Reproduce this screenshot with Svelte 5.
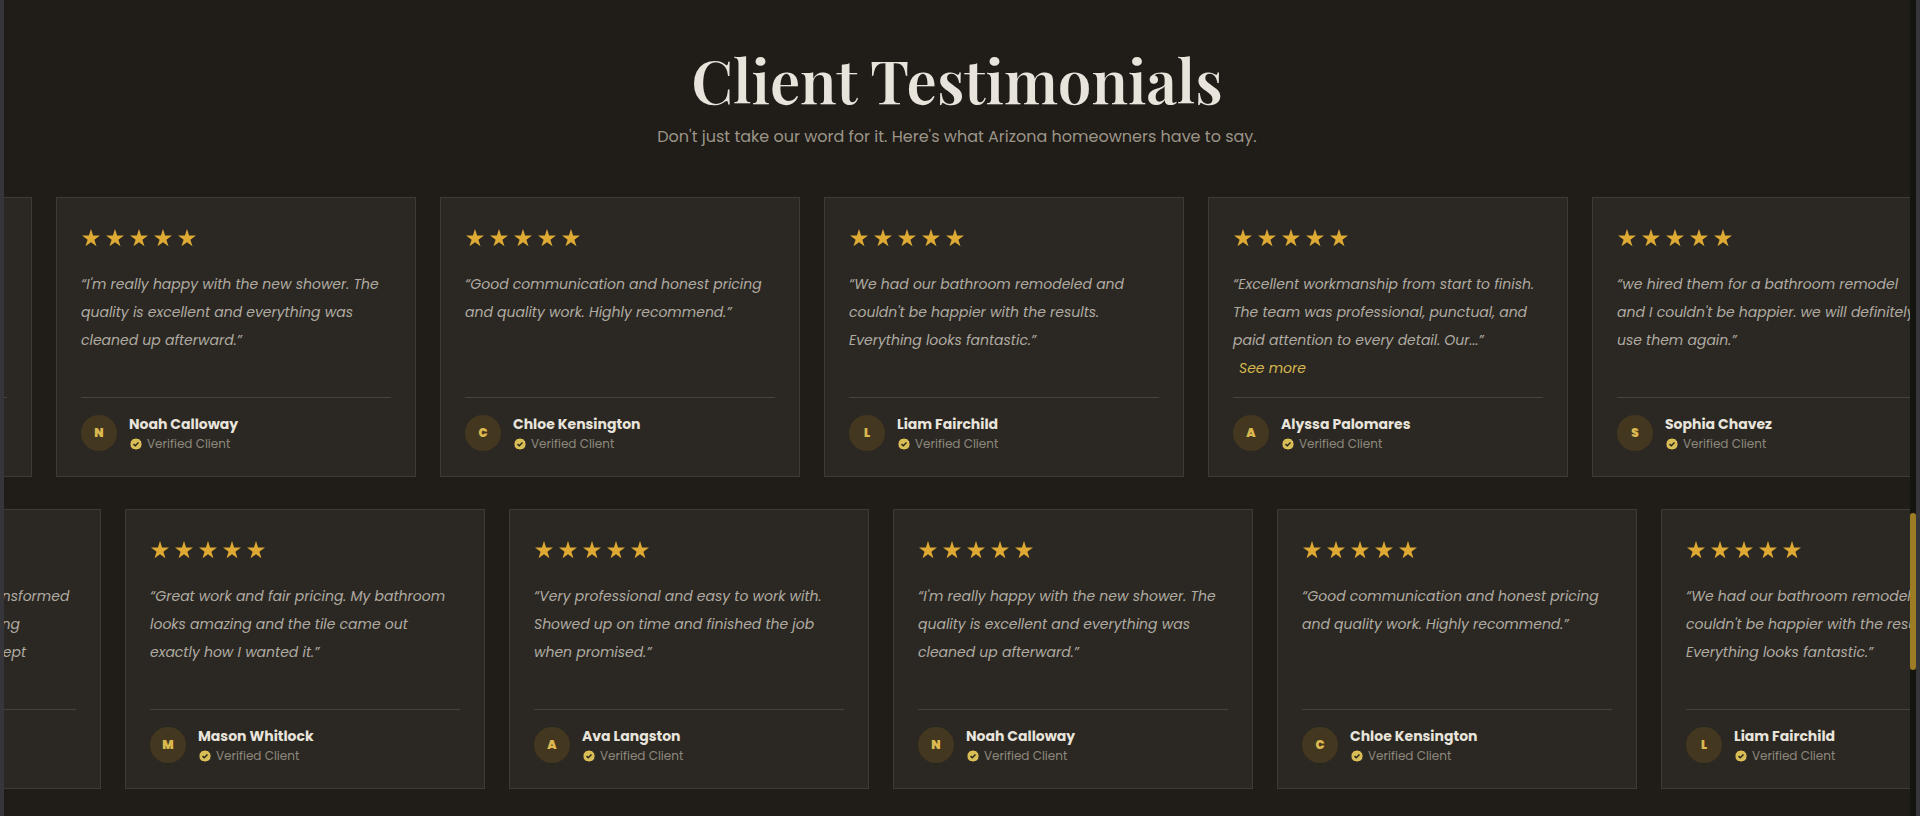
<script>
	const people = {
		ava: { name: 'Ava Langston', text: 'Very professional and easy to work with. Showed up on time and finished the job when promised.' },
		noah: { name: 'Noah Calloway', text: "I'm really happy with the new shower. The quality is excellent and everything was cleaned up afterward." },
		chloe: { name: 'Chloe Kensington', text: 'Good communication and honest pricing and quality work. Highly recommend.' },
		liam: { name: 'Liam Fairchild', text: "We had our bathroom remodeled and couldn't be happier with the results. Everything looks fantastic." },
		alyssa: { name: 'Alyssa Palomares', text: 'Excellent workmanship from start to finish. The team was professional, punctual, and paid attention to every detail. Our...', more: true },
		sophia: { name: 'Sophia Chavez', text: "we hired them for a bathroom remodel and I couldn't be happier. we will definitely use them again." },
		ethan: { name: 'Ethan Brooks', text: 'Great job, from start to finish. Transformed our whole bathroom and everything beautifully fits. On schedule and kept everything clean.' },
		mason: { name: 'Mason Whitlock', text: 'Great work and fair pricing. My bathroom looks amazing and the tile came out exactly how I wanted it.' }
	};

	// offset is how far each track has scrolled to the left
	const rows = [
		{ offset: 332, cards: [people.ava, people.noah, people.chloe, people.liam, people.alyssa, people.sophia] },
		{ offset: 263, cards: [people.ethan, people.mason, people.ava, people.noah, people.chloe, people.liam] }
	];
</script>

<div class="window">
	<section>
		<header>
			<h2>Client Testimonials</h2>
			<p>Don't just take our word for it. Here's what Arizona homeowners have to say.</p>
		</header>

		<div class="rows">
			{#each rows as row}
				<div class="track" style="transform: translateX({-row.offset}px)">
					{#each row.cards as card}
						<article class="card">
							<div class="stars" role="img" aria-label="5 out of 5 stars">
								{#each Array(5) as _}
									<svg viewBox="0 0 20 20"><path d="M10 1l2.1 6.6H19l-5.6 4.1 2.1 6.6L10 14.2l-5.5 4.1 2.1-6.6L1 7.600h6.900z" /></svg>
								{/each}
							</div>
							<blockquote>
								“{card.text}”
								{#if card.more}
									<button type="button">See more</button>
								{/if}
							</blockquote>
							<footer>
								<span class="avatar">{card.name[0]}</span>
								<div>
									<div class="name">{card.name}</div>
									<div class="verified">
										<svg viewBox="0 0 24 24">
											<path class="seal" d="M12 .5l2.900 1.400 3.200.1 1.700 2.700 2.600 1.900.1 3.200L23.500 12l-1 2.800-.1 3.200-2.600 1.900-1.700 2.200-3.200.1L12 23.500l-2.900-1.300-3.200-.1-1.700-2.200-2.600-1.900-.1-3.200L.5 12l1-2.200.1-3.200 2.600-1.900L5.900 2l3.200-.1z" />
											<path class="tick" d="M7 12.200l3.500 3.300L17 9" />
										</svg>
										Verified Client
									</div>
								</div>
							</footer>
						</article>
					{/each}
				</div>
			{/each}
		</div>
	</section>
	<div class="scrollbar"><div class="thumb"></div></div>
</div>

<style>
	:global(body) {
		margin: 0;
		background: #201c18;
	}

	.window {
		display: flex;
		min-height: 100vh;
		box-sizing: border-box;
		border-left: 4px solid #35353a;
		border-right: 4px solid #35373a;
		background: #201c18;
		color: #e8e4db;
		font-family: Poppins, Inter, sans-serif;
	}

	section {
		flex: 1;
		min-width: 0;
		overflow: hidden;
		padding: 41px 0 24px;
	}

	header {
		text-align: center;
		margin-bottom: 48px;
	}

	h2 {
		margin: 0 0 8px;
		font: 600 60px/76px 'Playfair Display', 'Liberation Serif', serif;
	}

	header p {
		margin: 0;
		font-size: 16px;
		line-height: 24px;
		color: #9b9588;
	}

	.rows {
		display: grid;
		gap: 32px;
	}

	.track {
		display: flex;
		gap: 24px;
	}

	.card {
		display: flex;
		flex-direction: column;
		flex: none;
		width: 360px;
		min-height: 280px;
		box-sizing: border-box;
		padding: 24px;
		border: 1px solid #3e3b36;
		background: #2b2823;
	}

	.stars {
		display: flex;
		align-items: center;
		gap: 4px;
		height: 32px;
		margin-bottom: 16px;
	}

	.stars svg {
		width: 20px;
		height: 20px;
		fill: #dfaa33;
	}

	blockquote {
		margin: 0;
		font-size: 14px;
		line-height: 28px;
		font-style: italic;
		color: #b0aba2;
	}

	button {
		display: block;
		margin: 0 0 0 6px;
		padding: 0;
		border: 0;
		background: none;
		font: inherit;
		color: #d6b64f;
		cursor: pointer;
	}

	footer {
		display: flex;
		align-items: center;
		gap: 12px;
		margin-top: auto;
		padding-top: 16px;
		border-top: 1px solid #45423d;
	}

	.avatar {
		width: 36px;
		height: 36px;
		border-radius: 50%;
		background: #43371f;
		color: #dcb850;
		font-size: 12px;
		font-weight: 900;
		line-height: 36px;
		text-align: center;
	}

	.name {
		font-size: 14px;
		font-weight: 700;
		line-height: 20px;
	}

	.verified {
		display: flex;
		align-items: center;
		gap: 5px;
		margin-top: 2px;
		font-size: 12px;
		line-height: 16px;
		color: #8d887e;
	}

	.verified svg {
		width: 12px;
		height: 12px;
		margin-left: 1px;
	}

	.seal {
		fill: #d9bd55;
	}

	.tick {
		fill: none;
		stroke: #2b2823;
		stroke-width: 3;
	}

	.scrollbar {
		width: 6px;
		background: #151510;
	}

	.thumb {
		height: 157px;
		margin-top: 513px;
		border-radius: 3px;
		background: #9c7c25;
	}
</style>
